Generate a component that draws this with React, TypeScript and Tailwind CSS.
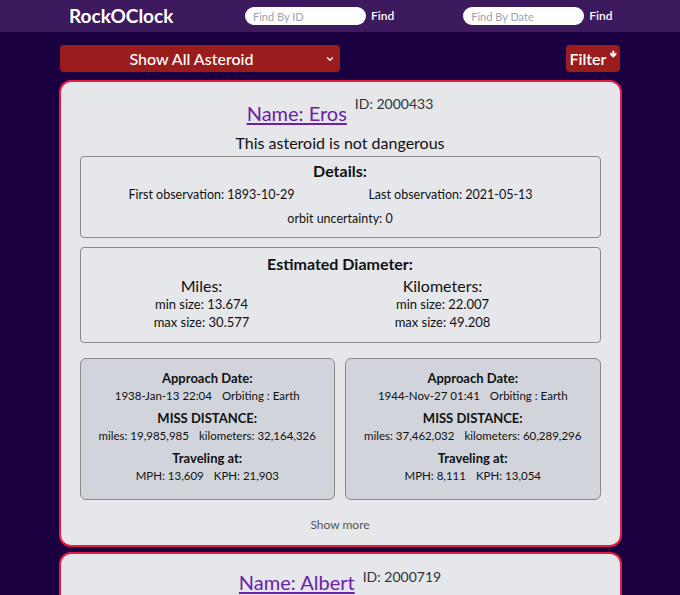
import { ChevronDown } from 'lucide-react';

type Approach = {
  date: string;
  orbiting: string;
  miles: string;
  km: string;
  mph: string;
  kph: string;
};

const approaches: Approach[] = [
  { date: '1938-Jan-13 22:04', orbiting: 'Earth', miles: '19,985,985', km: '32,164,326', mph: '13,609', kph: '21,903' },
  { date: '1944-Nov-27 01:41', orbiting: 'Earth', miles: '37,462,032', km: '60,289,296', mph: '8,111', kph: '13,054' },
];

function ApproachCard({ a }: { a: Approach }) {
  return (
    <div className="flex-1 h-[142px] rounded-md border border-[#8a8a8a] bg-[#d1d5db] pt-[10px] text-center text-[11.5px] leading-[17px] text-[#111]">
      <div className="text-[13px] font-bold leading-[18px]">Approach Date:</div>
      <div>
        {a.date}
        <span className="ml-[10px]">Orbiting : {a.orbiting}</span>
      </div>
      <div className="mt-[5px] text-[13px] font-bold leading-[18px]">MISS DISTANCE:</div>
      <div>
        miles: {a.miles}
        <span className="ml-[10px]">kilometers: {a.km}</span>
      </div>
      <div className="mt-[5px] text-[13px] font-bold leading-[18px]">Traveling at:</div>
      <div>
        MPH: {a.mph}
        <span className="ml-[10px]">KPH: {a.kph}</span>
      </div>
    </div>
  );
}

export default function App() {
  return (
    <div className="min-h-[595px] bg-[#1a0040]" style={{ fontFamily: 'Lato, "Noto Sans", sans-serif' }}>
      <header className="flex h-8 items-center bg-[#3d1a5e] text-white">
        <div className="ml-[69px] w-[176px] text-[19px] font-bold">RockOClock</div>
        <input
          placeholder="Find By ID"
          className="h-[18px] w-[121px] rounded-full bg-white px-[8px] text-[11px] text-black placeholder:text-[#9ca3af] outline-none"
        />
        <span className="ml-[5px] text-[12px] font-semibold">Find</span>
        <input
          placeholder="Find By Date"
          className="ml-[69px] h-[18px] w-[121px] rounded-full bg-white px-[8px] text-[11px] text-black placeholder:text-[#9ca3af] outline-none"
        />
        <span className="ml-[5px] text-[12px] font-semibold">Find</span>
      </header>

      <main className="mx-auto w-[563px] pt-[13px]">
        <div className="flex items-center justify-between pl-px pr-[2px]">
          <button className="relative h-[27px] w-[280px] rounded bg-[#9b1c1c] pr-[16px] text-[16px] font-medium text-white">
            Show All Asteroid
            <ChevronDown className="absolute right-[5px] top-[9px] h-[10px] w-[10px]" strokeWidth={3} />
          </button>
          <button className="h-[27px] w-[54px] rounded bg-[#9b1c1c] text-[16px] font-semibold text-white">
            Filter<span className="ml-[3px] align-top text-[9px]">&#129147;</span>
          </button>
        </div>

        <section className="mt-[8px] h-[467px] rounded-xl border-2 border-[#e11d48] bg-[#e5e7eb] px-[19px] text-[#111]">
          <div className="flex justify-center pt-[17px]">
            <a href="#" className="text-[20px] leading-[28px] text-[#6b21a8] underline underline-offset-2">Name: Eros</a>
            <span className="-mt-[4px] ml-[8px] text-[14px] leading-[18px] text-[#333]">ID: 2000433</span>
          </div>
          <div className="mt-[5px] text-center text-[16px] leading-[22px]">This asteroid is not dangerous</div>

          <div className="mt-[2px] h-[82px] rounded-sm border border-[#8a8a8a] pt-[2px] text-[12.5px] leading-[24px]">
            <div className="text-center text-[16px] font-bold">Details:</div>
            <div className="flex pl-[31px]">
              <div className="w-[200px] text-center">First observation: 1893-10-29</div>
              <div className="ml-[39px] w-[200px] text-center">Last observation: 2021-05-13</div>
            </div>
            <div className="text-center">orbit uncertainty: 0</div>
          </div>

          <div className="mt-[9px] h-[96px] rounded-sm border border-[#8a8a8a] pt-[3px] text-center">
            <div className="text-[16px] font-bold leading-[26px]">Estimated Diameter:</div>
            <div className="flex pl-[41px] text-[13px] leading-[18px]">
              <div className="w-[160px]">
                <div className="text-[16px] leading-[18px]">Miles:</div>
                <div>min size: 13.674</div>
                <div>max size: 30.577</div>
              </div>
              <div className="ml-[81px] w-[160px]">
                <div className="text-[16px] leading-[18px]">Kilometers:</div>
                <div>min size: 22.007</div>
                <div>max size: 49.208</div>
              </div>
            </div>
          </div>

          <div className="mt-[15px] flex gap-[10px]">
            {approaches.map((a) => (
              <ApproachCard key={a.date} a={a} />
            ))}
          </div>

          <div className="mt-[16px] text-center text-[12px] text-[#555]">Show more</div>
        </section>

        <section className="mt-[5px] h-[60px] rounded-t-xl border-2 border-b-0 border-[#e11d48] bg-[#e5e7eb]">
          <div className="flex justify-center pt-[14px]">
            <a href="#" className="text-[20px] leading-[28px] text-[#6b21a8] underline underline-offset-2">Name: Albert</a>
            <span className="ml-[8px] text-[14px] leading-[18px] text-[#333]">ID: 2000719</span>
          </div>
        </section>
      </main>
    </div>
  );
}
